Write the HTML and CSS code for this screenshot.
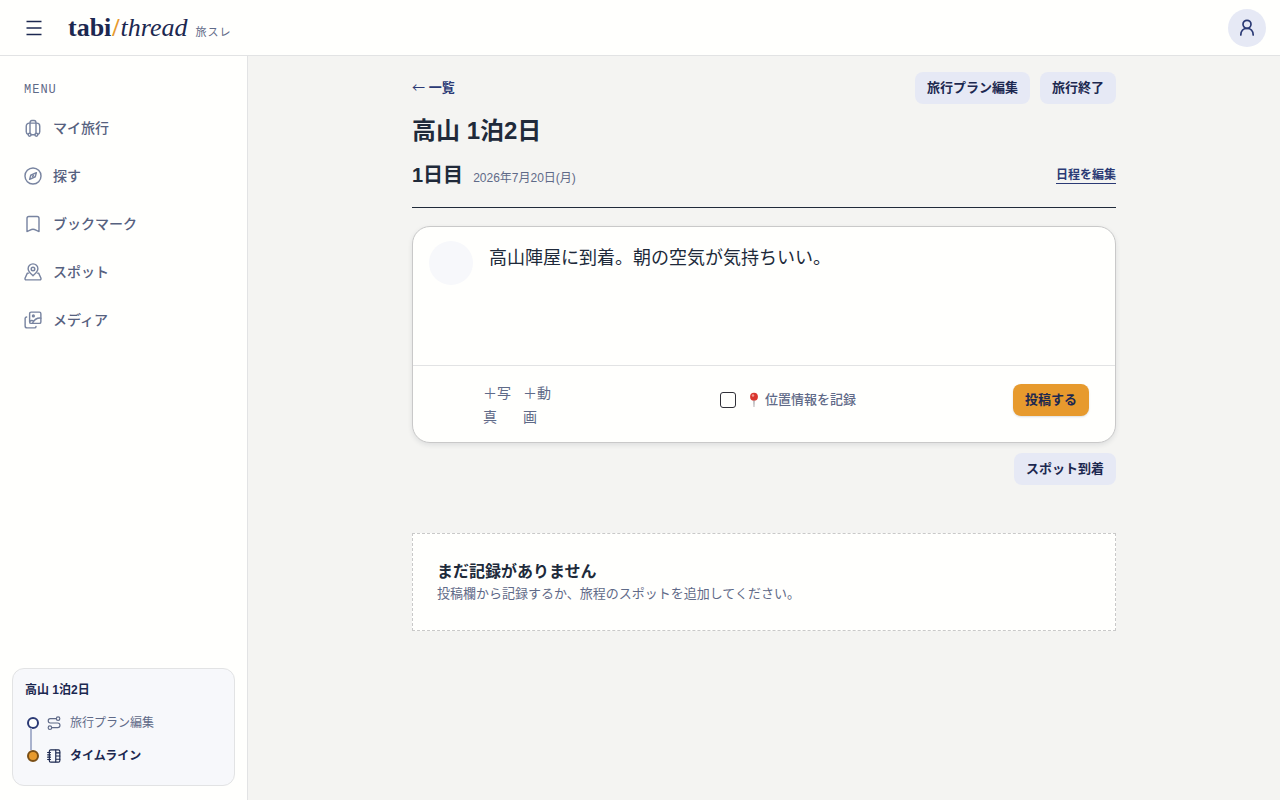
FILE: index.html
```html
<!DOCTYPE html>
<html lang="ja">
<head>
<meta charset="utf-8">
<meta name="viewport" content="width=device-width, initial-scale=1">
<title>高山 1泊2日 | tabi/thread</title>
<link rel="stylesheet" href="styles.css">
</head>
<body>
<div class="app">
  <header class="topbar">
    <button class="menu-button" type="button" aria-label="メニュー">
      <svg width="20" height="20" viewBox="0 0 20 20"><path d="M2.500 3.500h15M2.500 10h15M2.500 16.500h15"/></svg>
    </button>
    <a class="brand" href="#"><span class="brand-name"><b>tabi</b><span class="slash">/</span><i>thread</i></span><small>旅スレ</small></a>
    <button class="avatar-button" type="button" aria-label="アカウント">
      <svg width="20" height="20" viewBox="0 0 20 20"><circle cx="10" cy="6.300" r="4"/><path d="M3.800 17c0-4 2.600-6.700 6.200-6.700s6.200 2.700 6.200 6.700"/></svg>
    </button>
  </header>
  <aside class="sidebar">
    <p class="menu-title">MENU</p>
    <nav class="nav">
      <a href="#"><svg viewBox="0 0 24 24"><path d="M5.500 20.500C4 20 3 19 3 17V9.500a4 4 0 0 1 4-4h10a4 4 0 0 1 4 4V17c0 2-1 3-2.500 3.500M9.500 21h5"/><path d="M8 19V5.500C8 3.500 9 2 10.500 2h3C15 2 16 3.500 16 5.500V19"/><circle cx="7.500" cy="21" r="1.900"/><circle cx="16.500" cy="21" r="1.900"/></svg>マイ旅行</a>
      <a href="#"><svg viewBox="0 0 24 24"><circle cx="12" cy="12" r="10.700"/><path d="M16.500 7.500l-1.500 5.500-7.500 3.500L9 11z"/><path d="M11.500 12.500l1-1"/></svg>探す</a>
      <a href="#"><svg viewBox="0 0 24 24"><path d="M4 4.500A2.500 2.500 0 0 1 6.500 2h11A2.500 2.500 0 0 1 20 4.500V22c-2.500-.3-5-3-8-3s-5.500 2.700-8 3z"/></svg>ブックマーク</a>
      <a href="#"><svg viewBox="0 0 24 24"><path d="M12 17c-2-2-6.500-5-6.500-9.300a6.500 6.500 0 0 1 13 0C18.500 12 14 15 12 17z"/><circle cx="12" cy="8" r="2.400"/><path d="M6 13.500H4.500L1.500 20c-.5 1.500 0 2.500 1.500 2.500h18c1.500 0 2-1 1.500-2.500l-3-6.500H18"/></svg>スポット</a>
      <a href="#"><svg viewBox="0 0 24 24"><rect x="7.500" y="1.500" width="15" height="15" rx="2"/><path d="M3.500 8a2 2 0 0 0-2 2v10A2.500 2.500 0 0 0 4 22.500h10a2 2 0 0 0 2-2M11.500 16C13.500 12 17 9 22.500 9.500M8 13.500c1.500-1.500 4-1 5 .5"/><circle cx="12.500" cy="6.500" r="1.200"/></svg>メディア</a>
    </nav>
    <section class="trip-card">
      <h2>高山 1泊2日</h2>
      <ol class="steps">
        <li><a href="#"><span class="dot"></span><svg viewBox="0 0 24 24"><circle cx="19" cy="4.500" r="3"/><circle cx="5" cy="20" r="3"/><path d="M16 4.500H5.500c-4.500 0-4.500 7.500 0 7.500h13c5 0 5 8 0 8H8"/></svg>旅行プラン編集</a></li>
        <li><a class="current" href="#" aria-current="page"><span class="dot"></span><svg viewBox="0 0 24 24"><rect x="4" y="1.500" width="18" height="21" rx="2.500"/><path d="M15 2v20M1 6h5M1 10h5M1 14h5M1 18h5M15 6.500h7M15 12h7M15 17.500h7"/></svg>タイムライン</a></li>
      </ol>
    </section>
  </aside>
  <main class="main">
    <div class="content">
      <div class="actions">
        <a class="back" href="#"><span class="arrow">←</span> 一覧</a>
        <div class="action-buttons">
          <button class="button" type="button">旅行プラン編集</button>
          <button class="button" type="button">旅行終了</button>
        </div>
      </div>
      <h1>高山 1泊2日</h1>
      <div class="day-head">
        <h2>1日目</h2>
        <time datetime="2026-07-20">2026年7月20日(月)</time>
        <a href="#">日程を編集</a>
      </div>
      <form class="composer">
        <div class="compose">
          <span class="author"></span>
          <textarea aria-label="投稿内容">高山陣屋に到着。朝の空気が気持ちいい。</textarea>
        </div>
        <div class="composer-foot">
          <div class="uploads">
            <button type="button">＋写真</button>
            <button type="button">＋動画</button>
          </div>
          <label class="location"><input type="checkbox"><span class="location-text"><svg width="12" height="16" viewBox="0 0 12 16" aria-hidden="true"><path d="M5.400 8h1.200L6.300 15h-.6z" fill="#8b8b90"/><circle cx="6" cy="4.700" r="3.900" fill="#d9362f"/><circle cx="5" cy="3.500" r="1.200" fill="#f29a91"/></svg>位置情報を記録</span></label>
          <button class="button post" type="button">投稿する</button>
        </div>
      </form>
      <div class="after-composer"><button class="button" type="button">スポット到着</button></div>
      <section class="empty">
        <h3>まだ記録がありません</h3>
        <p>投稿欄から記録するか、旅程のスポットを追加してください。</p>
      </section>
    </div>
  </main>
</div>
</body>
</html>
```

FILE: styles.css
```css
:root {
  --paper: #fffffd;
  --canvas: #f4f4f2;
  --line: #e2e3e4;
  --navy: #1c2850;
  --indigo: #2b3a75;
  --ink: #202a3a;
  --muted: #5f6a88;
  --tint: #e6e9f5;
  --mist: #f7f8fb;
  --orange: #e79a2d;
}
* { box-sizing: border-box; }
body {
  margin: 0;
  background: var(--canvas);
  color: var(--ink);
  font-family: "Liberation Sans", "Noto Sans CJK JP", sans-serif;
  font-size: 14px;
  line-height: 20px;
}
h1, h2, h3, p, ol { margin: 0; padding: 0; }
a { color: inherit; text-decoration: none; }
button, textarea { font: inherit; color: inherit; border: 0; background: none; padding: 0; }
button { cursor: pointer; }
svg { display: block; flex: none; fill: none; stroke: currentColor; stroke-linecap: round; stroke-linejoin: round; }

.app {
  display: grid;
  grid-template: 56px 1fr / 248px 1fr;
  min-height: 100vh;
}
.topbar {
  grid-column: 1 / -1;
  display: flex;
  align-items: center;
  padding: 0 14px 0 24px;
  background: var(--paper);
  border-bottom: 1px solid var(--line);
  color: var(--navy);
}
.menu-button svg { stroke-width: 1.6; stroke-linecap: butt; }
.brand { display: flex; align-items: baseline; gap: 8px; margin-left: 24px; }
.brand-name { font-family: "Liberation Serif", serif; font-size: 26px; line-height: 32px; }
.slash { margin: 0 1px; color: var(--orange); font-weight: 700; }
.brand small { font-size: 11px; letter-spacing: 1px; color: var(--muted); }
.avatar-button {
  display: grid;
  place-items: center;
  width: 38px;
  height: 38px;
  margin-left: auto;
  border-radius: 50%;
  background: var(--tint);
  color: var(--indigo);
}
.avatar-button svg { stroke-width: 1.7; }

.sidebar {
  display: flex;
  flex-direction: column;
  padding: 24px 12px 14px;
  background: var(--paper);
  border-right: 1px solid var(--line);
}
.menu-title {
  padding: 0 12px;
  font-family: "Liberation Mono", monospace;
  font-size: 12px;
  letter-spacing: 1px;
  color: var(--muted);
}
.nav { display: grid; gap: 4px; margin-top: 6px; }
.nav a {
  display: flex;
  align-items: center;
  gap: 11px;
  height: 44px;
  padding: 0 12px;
  color: #56617f;
  font-weight: 500;
}
.nav svg { width: 18px; height: 18px; color: #7884a0; stroke-width: 1.9; }

.trip-card {
  margin-top: auto;
  padding: 11px 12px 13px;
  border: 1px solid var(--line);
  border-radius: 12px;
  background: var(--mist);
  font-size: 12px;
}
.trip-card h2 { font-size: 12px; color: var(--navy); }
.steps { margin-top: 6px; list-style: none; }
.steps li { position: relative; }
.steps a { display: flex; align-items: center; height: 33px; padding-left: 2px; color: var(--muted); }
.steps svg { width: 14px; height: 14px; margin: 0 9px 0 8px; stroke-width: 2; }
.steps .current { color: var(--navy); font-weight: 700; }
.dot {
  position: relative;
  width: 12px;
  height: 12px;
  border: 2px solid var(--indigo);
  border-radius: 50%;
  background: var(--paper);
}
.current .dot { border-color: #7a4f16; background: var(--orange); }
.steps li + li::before {
  content: "";
  position: absolute;
  left: 5px;
  top: -11px;
  width: 2px;
  height: 22px;
  background: #a9b2cd;
}

.main { padding: 16px 24px; }
.content { max-width: 704px; margin: 0 auto; }
.actions { display: flex; align-items: center; justify-content: space-between; }
.back { font-size: 13px; font-weight: 700; color: var(--indigo); }
.arrow { font-family: "Noto Sans CJK JP", sans-serif; font-weight: 400; line-height: 1; }
.action-buttons { display: flex; gap: 10px; }
.button {
  height: 32px;
  padding: 0 12px;
  border-radius: 8px;
  background: var(--tint);
  color: var(--navy);
  font-size: 13px;
  font-weight: 700;
}
h1 { margin-top: 11px; font-size: 24px; line-height: 32px; }
.day-head {
  display: flex;
  align-items: baseline;
  gap: 10px;
  margin-top: 13px;
  padding-bottom: 17px;
  border-bottom: 1px solid var(--ink);
}
.day-head h2 { font-size: 20px; line-height: 30px; }
.day-head time { font-size: 12px; color: var(--muted); }
.day-head a {
  align-self: center;
  margin-left: auto;
  border-bottom: 1px solid var(--indigo);
  color: var(--indigo);
  font-size: 12px;
  font-weight: 700;
  line-height: 16px;
}

.composer {
  margin-top: 18px;
  border: 1px solid #c9c9c9;
  border-radius: 18px;
  background: var(--paper);
  box-shadow: 0 2px 5px rgb(30 40 60 / 10%);
}
.compose { display: flex; gap: 16px; padding: 14px 16px; }
.author { width: 44px; height: 44px; border-radius: 50%; background: var(--mist); }
.compose textarea {
  flex: 1;
  height: 110px;
  font-size: 18px;
  line-height: 34px;
  resize: none;
  outline: 0;
}
.composer-foot {
  display: flex;
  align-items: flex-start;
  justify-content: space-between;
  padding: 15px 26px 13px 70px;
  border-top: 1px solid var(--line);
  color: var(--muted);
}
.uploads { display: flex; gap: 12px; padding-right: 12px; }
.uploads button { width: 28px; line-height: 24px; text-align: left; }
.location { display: flex; align-items: center; gap: 12px; height: 32px; margin-top: 3px; font-size: 13px; font-weight: 500; }
.location input {
  appearance: none;
  width: 16px;
  height: 16px;
  margin: 0;
  border: 1px solid #303038;
  border-radius: 3px;
  background: var(--paper);
}
.location-text { display: flex; align-items: center; gap: 5px; }
.location-text svg { stroke: none; }
.post { margin-top: 3px; background: var(--orange); box-shadow: 0 1px 2px rgb(30 40 60 / 15%); }
.after-composer { display: flex; justify-content: flex-end; margin-top: 10px; }
.empty {
  margin-top: 48px;
  padding: 26px 24px;
  border: 1px dashed #c9c9c9;
  background: var(--paper);
}
.empty h3 { font-size: 16px; line-height: 24px; }
.empty p { font-size: 13px; color: var(--muted); }
```
